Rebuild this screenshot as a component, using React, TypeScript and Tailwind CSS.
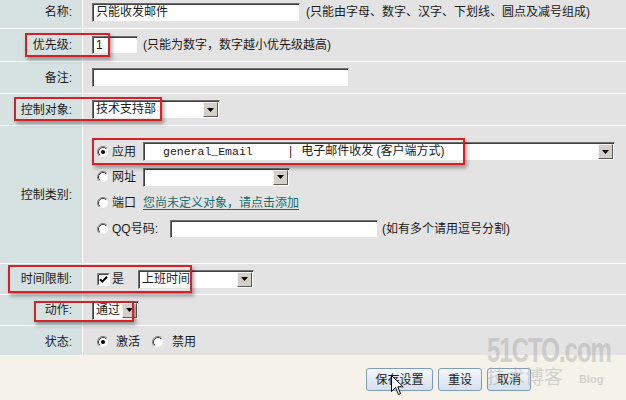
import type { ReactNode } from "react";

function Radio({ checked }: { checked?: boolean }) {
  return (
    <svg width="12" height="12" viewBox="0 0 12 12" className="shrink-0">
      <circle cx="6" cy="6" r="5.5" fill="#fff" stroke="#dcdcdc" />
      <path d="M2.1 9.9 A5.5 5.5 0 0 1 9.9 2.1" fill="none" stroke="#808080" />
      <path d="M2.8 9.2 A4.5 4.5 0 0 1 9.2 2.8" fill="none" stroke="#404040" />
      {checked && <circle cx="6" cy="6" r="2" fill="#000" />}
    </svg>
  );
}

function Checkbox() {
  return (
    <svg width="13" height="13" viewBox="0 0 13 13" className="shrink-0">
      <rect x="0" y="0" width="13" height="13" fill="#fff" />
      <path d="M0.5 12.5V0.5H12.5" fill="none" stroke="#808080" />
      <path d="M1.5 11.5V1.5H11.5" fill="none" stroke="#404040" />
      <path d="M3 6.2 5.3 8.6 10 3.8" fill="none" stroke="#000" strokeWidth="2" />
    </svg>
  );
}

function Select({ w, children }: { w: string; children?: ReactNode }) {
  return (
    <div
      className={`flex h-[19px] shrink-0 items-center border border-[#6f6f6f] border-r-[#e4e4e4] border-b-[#e4e4e4] bg-white shadow-[inset_1px_1px_0_#404040] ${w}`}
    >
      <div className="flex flex-1 items-center overflow-hidden whitespace-pre pl-[3px] text-[12px] leading-[17px]">
        {children}
      </div>
      <div className="mr-px flex h-[15px] w-[15px] shrink-0 items-center justify-center border border-[#f4f4f4] border-r-[#5a5a5a] border-b-[#5a5a5a] bg-[#d4d0c8]">
        <svg width="7" height="4" viewBox="0 0 7 4">
          <path d="M0 0H7L3.5 4Z" fill="#000" />
        </svg>
      </div>
    </div>
  );
}

function Input({ w, h, value }: { w: string; h: string; value?: string }) {
  return (
    <div
      className={`shrink-0 border border-[#6f6f6f] border-r-[#e4e4e4] border-b-[#e4e4e4] bg-white pl-[3px] text-[12px] leading-[17px] shadow-[inset_1px_1px_0_#404040] ${w} ${h}`}
    >
      {value}
    </div>
  );
}

function Row({
  label,
  h,
  last,
  pad = "",
  children,
}: {
  label: string;
  h: string;
  last?: boolean;
  pad?: string;
  children: ReactNode;
}) {
  return (
    <div className={`flex ${h} ${last ? "" : "border-b border-white"}`}>
      <div
        className={`flex w-[83px] shrink-0 items-center justify-end border-r border-white bg-[#d6e2e2] pr-[10px] ${pad}`}
      >
        {label}
      </div>
      <div className={`flex flex-1 items-center bg-[#e3e3e3] pl-[9px] ${pad}`}>{children}</div>
    </div>
  );
}

function RedBox({ cls }: { cls: string }) {
  return (
    <div
      className={`pointer-events-none absolute border-2 border-[#d42128] shadow-[2px_3px_4px_rgba(0,0,0,0.35)] ${cls}`}
    />
  );
}

function Btn({ w, label }: { w: string; label: string }) {
  return (
    <div
      className={`flex h-[23px] items-center justify-center rounded-[3px] border border-[#7f9db9] bg-gradient-to-b from-[#f4f7fb] to-[#d6e0ec] text-[12px] ${w}`}
    >
      {label}
    </div>
  );
}

export default function App() {
  return (
    <div className="relative h-[400px] w-[626px] overflow-hidden bg-[#f5f3e9] font-['Liberation_Sans','Noto_Sans_CJK_SC',sans-serif] text-[12px] text-[#1a1a1a]">
      <Row label="名称:" h="h-[29px]" pad="pb-[4px]">
        <Input w="w-[208px]" h="h-[19px]" value="只能收发邮件" />
        <span className="ml-[6px]">(只能由字母、数字、汉字、下划线、圆点及减号组成)</span>
      </Row>
      <Row label="优先级:" h="h-[33px]">
        <Input w="w-[46px]" h="h-[18px]" value="1" />
        <span className="ml-[5px]">(只能为数字，数字越小优先级越高)</span>
      </Row>
      <Row label="备注:" h="h-[32px]">
        <Input w="w-[257px]" h="h-[19px]" />
      </Row>
      <Row label="控制对象:" h="h-[32px]">
        <Select w="w-[128px]">技术支持部</Select>
      </Row>
      <Row label="控制类别:" h="h-[138px]">
        <div className="flex flex-col pb-[8px]">
          <div className="flex h-[26px] items-center">
            <span className="ml-[5px]">
              <Radio checked />
            </span>
            <span className="ml-[3px] w-[31px]">应用</span>
            <Select w="w-[472px]">
              <span className="w-[142px] pl-[16px] font-['Liberation_Mono',monospace] text-[11.5px]">general_Email</span>
              <span>|</span>
              <span className="ml-[9px]">电子邮件收发 (客户端方式)</span>
            </Select>
          </div>
          <div className="flex h-[25px] items-center">
            <span className="ml-[5px]">
              <Radio />
            </span>
            <span className="ml-[3px] w-[31px]">网址</span>
            <Select w="w-[147px]" />
          </div>
          <div className="flex h-[26px] items-center">
            <span className="ml-[5px]">
              <Radio />
            </span>
            <span className="ml-[3px] w-[31px]">端口</span>
            <span className="text-[#136b70] underline underline-offset-2">您尚未定义对象，请点击添加</span>
          </div>
          <div className="flex h-[27px] items-center">
            <span className="ml-[5px]">
              <Radio />
            </span>
            <span className="ml-[3px] w-[58px]">QQ号码:</span>
            <Input w="w-[208px]" h="h-[18px]" />
            <span className="ml-[4px]">(如有多个请用逗号分割)</span>
          </div>
        </div>
      </Row>
      <Row label="时间限制:" h="h-[31px]">
        <span className="ml-[5px]">
          <Checkbox />
        </span>
        <span className="ml-[2px] w-[26px]">是</span>
        <Select w="w-[116px]">上班时间</Select>
      </Row>
      <Row label="动作:" h="h-[31px]">
        <Select w="w-[47px]">通过</Select>
      </Row>
      <Row label="状态:" h="h-[29px]" last pad="pt-[3px]">
        <span className="ml-[5px]">
          <Radio checked />
        </span>
        <span className="ml-[7px] w-[36px]">激活</span>
        <Radio />
        <span className="ml-[8px]">禁用</span>
      </Row>

      <div className="flex gap-[5px] pl-[366px] pt-[13px]">
        <Btn w="w-[67px]" label="保存设置" />
        <Btn w="w-[44px]" label="重设" />
        <Btn w="w-[44px]" label="取消" />
      </div>

      <RedBox cls="left-[25px] top-[33px] h-[24px] w-[85px]" />
      <RedBox cls="left-[14px] top-[97px] h-[24px] w-[148px]" />
      <RedBox cls="left-[92px] top-[138px] h-[27px] w-[373px]" />
      <RedBox cls="left-[8px] top-[265px] h-[28px] w-[184px]" />
      <RedBox cls="left-[34px] top-[301px] h-[21px] w-[100px]" />

      <div className="pointer-events-none absolute left-[487px] top-[336px] select-none text-[#a0a0a0] opacity-40">
        <div className="origin-top scale-y-[1.45] text-[24px] font-bold leading-[20px] tracking-[-1px]">
          51CTO.com
        </div>
        <div className="mt-[10px] flex items-end gap-[16px]">
          <span className="text-[19px] leading-[20px] font-['Noto_Sans_CJK_SC',sans-serif]">技术博客</span>
          <span className="text-[11px] font-bold leading-[14px]">Blog</span>
        </div>
      </div>

      <svg className="pointer-events-none absolute left-[391px] top-[375px]" width="13" height="21" viewBox="0 0 13 21">
        <path d="M0.5 0.5V16.5L4.5 12.5L7.5 19.5L9.5 18.5L6.8 11.8H12.2Z" fill="#fff" stroke="#000" strokeLinejoin="round" />
      </svg>
    </div>
  );
}
